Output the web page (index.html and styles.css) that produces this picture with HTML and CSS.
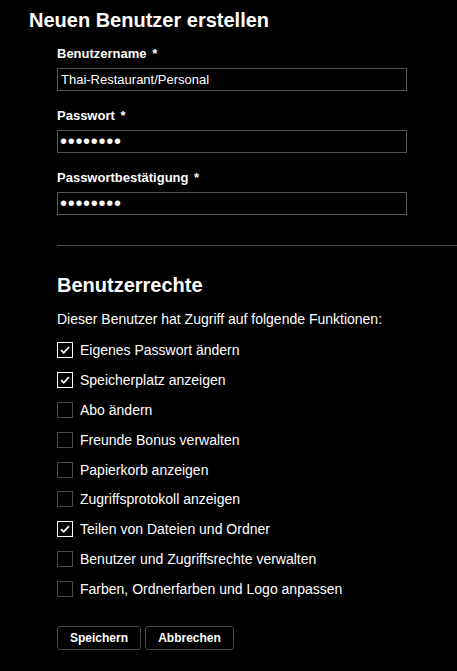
FILE: index.html
```html
<!DOCTYPE html>
<html lang="de">
<head>
  <meta charset="UTF-8">
  <meta name="viewport" content="width=device-width, initial-scale=1.0">
  <title>Neuen Benutzer erstellen</title>
  <link rel="stylesheet" href="styles.css">
</head>
<body>

  <h1>Neuen Benutzer erstellen</h1>

  <div class="form">
    <div class="field">
      <label>Benutzername <span class="req">*</span></label>
      <input type="text" value="Thai-Restaurant/Personal">
    </div>
    <div class="field">
      <label>Passwort <span class="req">*</span></label>
      <input type="password" class="pw" value="geheim12">
    </div>
    <div class="field">
      <label>Passwortbestätigung <span class="req">*</span></label>
      <input type="password" class="pw" value="geheim12">
    </div>
  </div>

  <hr class="trenner">

  <div class="rechte">
    <h2>Benutzerrechte</h2>
    <p class="hinweis">Dieser Benutzer hat Zugriff auf folgende Funktionen:</p>

    <ul class="liste">
      <li><span class="box an"><svg viewBox="0 0 16 16"><path d="M3.5 8.2 L6.5 11.2 L12.5 4.8"/></svg></span>Eigenes Passwort ändern</li>
      <li><span class="box an"><svg viewBox="0 0 16 16"><path d="M3.5 8.2 L6.5 11.2 L12.5 4.8"/></svg></span>Speicherplatz anzeigen</li>
      <li><span class="box"></span>Abo ändern</li>
      <li><span class="box"></span>Freunde Bonus verwalten</li>
      <li><span class="box"></span>Papierkorb anzeigen</li>
      <li><span class="box"></span>Zugriffsprotokoll anzeigen</li>
      <li><span class="box an"><svg viewBox="0 0 16 16"><path d="M3.5 8.2 L6.5 11.2 L12.5 4.8"/></svg></span>Teilen von Dateien und Ordner</li>
      <li><span class="box"></span>Benutzer und Zugriffsrechte verwalten</li>
      <li><span class="box"></span>Farben, Ordnerfarben und Logo anpassen</li>
    </ul>

    <div class="aktionen">
      <button class="btn-speichern">Speichern</button>
      <button class="btn-abbrechen">Abbrechen</button>
    </div>
  </div>

</body>
</html>
```

FILE: styles.css
```css
body {
  margin: 0;
  background: #000;
  color: #fff;
  font-family: "Liberation Sans", Arial, sans-serif;
}
h1 {
  margin: 0;
  padding: 9px 0 0 29px;
  font-size: 20px;
  line-height: 23px;
  font-weight: bold;
}
.form {
  padding: 14px 0 0 57px;
}
.field {
  margin-bottom: 17px;
}
.field label {
  display: block;
  font-size: 13px;
  font-weight: bold;
  line-height: 15px;
  margin-bottom: 7px;
}
.req {
  margin-left: 2px;
}
.field input {
  display: block;
  box-sizing: border-box;
  width: 350px;
  height: 23px;
  margin: 0;
  padding: 0 3px;
  background: #000;
  color: #fff;
  border: 1px solid #555;
  font-family: "Liberation Sans", Arial, sans-serif;
  font-size: 13px;
  outline: none;
}
.field input.pw {
  font-size: 20px;
  letter-spacing: 0.7px;
  padding-left: 2px;
}
.trenner {
  margin: 30px 0 0 57px;
  border: none;
  border-top: 1px solid #4a4a4a;
  height: 0;
}
.rechte {
  padding-left: 57px;
}
h2 {
  margin: 0;
  padding-top: 28px;
  font-size: 20px;
  line-height: 23px;
  font-weight: bold;
}
.hinweis {
  margin: 14px 0 0;
  font-size: 14px;
  line-height: 16px;
}
.liste {
  list-style: none;
  margin: 15px 0 0;
  padding: 0;
}
.liste li {
  display: flex;
  align-items: center;
  gap: 7px;
  height: 16px;
  margin-bottom: 13.9px;
  font-size: 14px;
  line-height: 16px;
}
.box {
  box-sizing: border-box;
  width: 16px;
  height: 16px;
  border: 1px solid #4a4a4a;
  flex-shrink: 0;
}
.box.an {
  border-color: #fff;
}
.box svg {
  display: block;
  width: 14px;
  height: 14px;
  fill: none;
  stroke: #fff;
  stroke-width: 2;
}
.aktionen {
  display: flex;
  gap: 4px;
  margin-top: 29px;
}
.aktionen button {
  height: 24px;
  background: #000;
  color: #fff;
  border: 1px solid #444;
  border-radius: 3px;
  font-family: "Liberation Sans", Arial, sans-serif;
  font-size: 12px;
  font-weight: bold;
  cursor: pointer;
}
.btn-speichern {
  width: 84px;
}
.btn-abbrechen {
  width: 89px;
}
```
